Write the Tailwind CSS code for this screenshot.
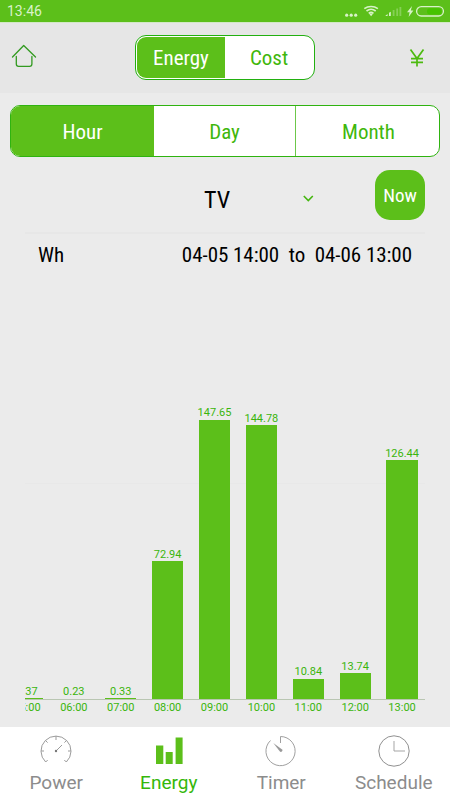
<!DOCTYPE html>
<html lang="en">
<head>
    <meta charset="UTF-8">
    <meta name="viewport" content="width=device-width, initial-scale=1.0">
    <title>Energy</title>
    <script src="https://cdn.jsdelivr.net/npm/@tailwindcss/browser@4"></script>
</head>
<body class="w-[450px] h-[800px] overflow-hidden flex flex-col bg-[#ebebeb] font-['Roboto',sans-serif]">

<!-- Status bar -->
<div class="h-[22px] shrink-0 flex items-center justify-between pl-[7px] pr-[6px] bg-[#5cbf1a] text-[#d8f2c8]">
    <span class="text-[14px] leading-none">13:46</span>
    <svg width="100" height="22" viewBox="0 0 100 22" fill="none" stroke="#d8f2c8">
        <g fill="#d8f2c8" stroke="none">
            <circle cx="2.7" cy="15.2" r="1.6"/><circle cx="7.2" cy="15.2" r="1.6"/><circle cx="11.7" cy="15.2" r="1.6"/>
            <path d="M25 13.500h4.200l-2.100 2.700z"/>
            <path d="M41.200 16l2.400-2V16zM45 16v-3.200l1.800-1V16z"/>
            <path d="M68 6l-5 6.200h2.600L64.600 17l4.800-6.600h-2.600z"/>
        </g>
        <path stroke-width="1.6" d="M20.300 8.600c4-2.900 9.600-2.900 13.600 0M22.500 11c2.700-2.100 6.500-2.100 9.200 0M24.700 13.300c1.500-1.100 3.300-1.100 4.800 0"/>
        <path stroke="#86d056" stroke-width="1.8" d="M49.600 16v-6M53.200 16V8.500M56.400 16V7"/>
        <rect x="72.600" y="6.600" width="26.800" height="9.400" rx="4.700" stroke-width="1.300"/>
        <rect x="83" y="8.200" width="14.500" height="6.200" rx="3" fill="#46c300" stroke="none"/>
    </svg>
</div>

<!-- Header -->
<div class="h-[71px] shrink-0 flex items-center bg-[#e6e6e6] border-t border-[#d3e8c6]">
    <div class="w-[135px] pl-[11px]">
        <svg class="-mt-[5px]" width="26" height="26" viewBox="0 0 26 26" fill="none" stroke="#329a20" stroke-width="1.300" stroke-linejoin="round" stroke-linecap="round">
            <path d="M1.500 14L12.700 2.500 24.500 14M5.300 13.500v7.500q0 2.300 2.300 2.300h11q2.300 0 2.300-2.300v-7.500"/>
        </svg>
    </div>
    <div class="-mt-px w-[180px] h-[45px] flex p-px border border-[#22b010] rounded-[11px] bg-white text-[21px] font-stretch-condensed">
        <div class="w-[88px] pt-[3px] flex items-center justify-center rounded-l-[9px] bg-[#5cbf1a] text-white">Energy</div>
        <div class="flex-1 pt-[3px] flex items-center justify-center text-[#3fb70c]">Cost</div>
    </div>
    <svg class="ml-[94px]" width="16" height="20" viewBox="0 0 16 20" fill="none" stroke="#4dba10" stroke-width="1.700">
        <path d="M1.500 1.500L8 10.500 14.500 1.500M8 10v8.500M2 10.700h12M2 14.300h12"/>
    </svg>
</div>

<!-- Period tabs -->
<div class="mt-[12px] mx-[10px] h-[52px] shrink-0 flex overflow-hidden border border-[#2fb310] rounded-[10px] bg-white text-[21px] text-[#3fb70c] font-stretch-condensed">
    <div class="w-[143px] pt-[4px] flex items-center justify-center bg-[#5cbf1a] text-white">Hour</div>
    <div class="w-[142px] pt-[4px] flex items-center justify-center border-r border-[#6cc84a]">Day</div>
    <div class="flex-1 pt-[4px] pl-[2px] flex items-center justify-center">Month</div>
</div>

<!-- Device picker -->
<div class="h-[77px] shrink-0 mx-[25px] flex items-center border-b-2 border-[#e7e7e7]">
    <div class="ml-[179px] w-[99px] mt-[10px] text-[24px] leading-none font-stretch-condensed">TV</div>
    <svg class="mt-[9px]" width="11" height="8" viewBox="0 0 11 8" fill="none" stroke="#45b610" stroke-width="1.600"><path d="M.800 1l4.500 4.500L9.800 1"/></svg>
    <div class="ml-auto mt-px w-[50px] h-[50px] pt-[2px] flex items-center justify-center rounded-[15px] bg-[#5cbf1a] text-white text-[19px] font-stretch-condensed">Now</div>
</div>

<!-- Range -->
<div class="h-[41px] pt-[3px] shrink-0 flex items-center justify-between px-[38px] text-[21px] font-stretch-condensed">
    <span>Wh</span>
    <span class="whitespace-pre tracking-[-0.050px]">04-05 14:00  to  04-06 13:00</span>
</div>

<!-- Bar chart -->
<div class="relative mx-[25px] flex-1 overflow-hidden flex flex-col justify-end pb-[14px]">
    <div class="absolute inset-x-0 top-[208px] border-t border-[#e8e8e8]"></div>
    <div id="chart" class="relative w-[422px] -ml-[21.500px] shrink-0 flex items-end text-[11px] leading-none text-[#3ab50c]"></div>
</div>

<!-- Bottom navigation -->
<div class="h-[73px] shrink-0 grid grid-cols-4 bg-white text-[19px] leading-none text-[#8c8c8c]">
    <div class="flex flex-col items-center pt-[7px]">
        <svg width="34" height="34" viewBox="0 0 34 34" fill="none" stroke="#9b9b9b" stroke-width="1">
            <path d="M6.700 28A15 15 0 1 1 27.300 28M17 2v4M2 17h3M29 17h3M6.400 6.400l2.200 2.200M27.600 6.400l-2.200 2.200M6.700 28l2-2M27.300 28l-2-2M17 17l6-6"/>
            <circle cx="17" cy="17" r="1.200" fill="#777" stroke="none"/>
        </svg>
        <span class="mt-[5px]">Power</span>
    </div>
    <div class="flex flex-col items-center pt-[7px] text-[#35b70a]">
        <svg width="34" height="34" viewBox="0 0 34 34" fill="#5cbf1a"><path d="M4 11.500h7.300v18.500H4zM13.700 18h7v12h-7zM23.600 3.500h7v26.500h-7z"/></svg>
        <span class="mt-[5px]">Energy</span>
    </div>
    <div class="flex flex-col items-center pt-[7px]">
        <svg width="34" height="34" viewBox="0 0 34 34" fill="none" stroke="#a0a0a0" stroke-width="1">
            <path d="M16.500 9V2.500A14.600 14.600 0 1 1 6.500 6.500"/>
            <path d="M9.300 9l8.800 6.500q.9 1-.2 2-1.200 1-2.200-.2z" fill="#999" stroke="none"/>
        </svg>
        <span class="mt-[5px]">Timer</span>
    </div>
    <div class="flex flex-col items-center pt-[7px]">
        <svg width="34" height="34" viewBox="0 0 34 34" fill="none" stroke="#909090" stroke-width="1">
            <circle cx="17" cy="17" r="15.200"/><path stroke="#a5a5a5" d="M17 7v10h11"/>
        </svg>
        <span class="mt-[5px]">Schedule</span>
    </div>
</div>

<script>
    const data = [
        ['05:00', '0.37'], ['06:00', '0.23'], ['07:00', '0.33'],
        ['08:00', '72.94'], ['09:00', '147.65'], ['10:00', '144.78'],
        ['11:00', '10.84'], ['12:00', '13.74'], ['13:00', '126.44']
    ];
    document.getElementById('chart').innerHTML = data.map(([hour, wh]) => `
        <div class="flex-1 flex flex-col items-center">
            <span class="mb-[1.500px]">${wh}</span>
            <div class="w-[31.300px] bg-[#5cbf1a]" style="height: ${wh * 1.89}px"></div>
            <div class="w-full border-t border-[#b9c6b2] pt-[2px] text-center">${hour}</div>
        </div>`).join('');
</script>
</body>
</html>
